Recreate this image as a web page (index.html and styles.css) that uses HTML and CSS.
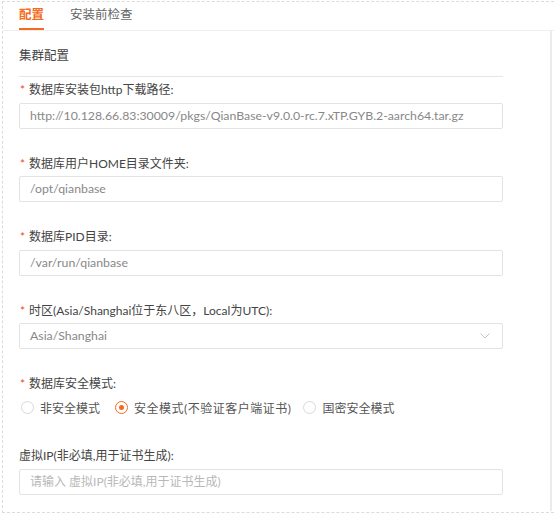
FILE: index.html
```html
<!DOCTYPE html>
<html lang="zh">
<head>
<meta charset="utf-8">
<link rel="stylesheet" href="styles.css">
</head>
<body>
<div class="frame">
  <div class="tabs">
    <div class="tab active">配置</div>
    <div class="tab">安装前检查</div>
  </div>
  <div class="panel">
    <div class="section-title">集群配置</div>
    <div class="item">
      <div class="label"><span class="req">*</span>数据库安装包http下载路径:</div>
      <div class="input">http://10.128.66.83:30009/pkgs/QianBase-v9.0.0-rc.7.xTP.GYB.2-aarch64.tar.gz</div>
    </div>
    <div class="item">
      <div class="label"><span class="req">*</span>数据库用户HOME目录文件夹:</div>
      <div class="input">/opt/qianbase</div>
    </div>
    <div class="item">
      <div class="label"><span class="req">*</span>数据库PID目录:</div>
      <div class="input">/var/run/qianbase</div>
    </div>
    <div class="item">
      <div class="label"><span class="req">*</span>时区(Asia/Shanghai位于东八区，Local为UTC):</div>
      <div class="input select">
        <span>Asia/Shanghai</span>
        <svg class="chev" width="10" height="6" viewBox="0 0 10 6"><path d="M0.5 0.5 L5 5 L9.5 0.5" fill="none" stroke="#c0c4cc" stroke-width="1"/></svg>
      </div>
    </div>
    <div class="item radio-item">
      <div class="label"><span class="req">*</span>数据库安全模式:</div>
      <div class="radios">
        <label class="radio"><span class="dot"></span>非安全模式</label>
        <label class="radio checked"><span class="dot"></span>安全模式(不验证客户端证书)</label>
        <label class="radio"><span class="dot"></span>国密安全模式</label>
      </div>
    </div>
    <div class="item">
      <div class="label plain">虚拟IP(非必填,用于证书生成):</div>
      <div class="input placeholder">请输入 虚拟IP(非必填,用于证书生成)</div>
    </div>
  </div>
</div>
</body>
</html>
```
FILE: styles.css
```css
* { box-sizing: border-box; }
html, body { margin: 0; padding: 0; background: #fff; }
body {
  font-family: "Lato", "Noto Sans CJK SC", sans-serif;
  font-size: 12px;
  color: #444;
  overflow: hidden;
}
.frame {
  margin: 1px 0 0 2px;
  width: 552px;
  height: 512px;
  border: 1px dashed #dcdcdc;
  border-right: none;
}
.tabs {
  display: flex;
  height: 29px;
  padding-left: 16px;
  gap: 26px;
  border-bottom: 1px solid #eeeeee;
}
.tab {
  font-size: 12.5px;
  line-height: 25px;
  color: #666;
}
.tab.active {
  color: #f26b21;
  font-weight: 700;
  border-bottom: 2px solid #f26b21;
}
.panel {
  width: 549px;
  height: 480px;
  border-right: 2px solid #ebebeb;
  padding: 15px 47px 0 16px;
}
.section-title {
  font-size: 12.5px;
  line-height: 20px;
  color: #444;
  padding-bottom: 10px;
  border-bottom: 1px solid #e6e6e6;
  margin-bottom: 1px;
}
.item { margin-bottom: 23px; }
.label {
  line-height: 20px;
  padding-top: 2px;
  color: #444;
}
.req {
  color: #f04a2a;
  display: inline-block;
  width: 10px;
  padding-left: 1px;
  font-size: 12px;
}
.input {
  margin-top: 2.5px;
  height: 26px;
  border: 1px solid #e3e3e3;
  border-radius: 2px;
  padding: 0 10px;
  line-height: 24px;
  font-size: 12.3px;
  color: #888;
  white-space: nowrap;
  overflow: hidden;
}
.input.placeholder { color: #b8b8b8; font-size: 12px; }
.select {
  display: flex;
  justify-content: space-between;
  align-items: center;
}
.chev { margin-right: 2px; }
.radio-item { margin-bottom: 27px; }
.radios {
  margin-top: 3px;
  display: flex;
  align-items: center;
  height: 20px;
  padding-left: 2px;
}
.radio {
  display: flex;
  align-items: center;
  color: #555;
  margin-right: 15px;
}
.radio.checked {
  letter-spacing: 0.5px;
  margin-right: 12px;
}
.dot {
  width: 13px;
  height: 13px;
  border: 1px solid #d9d9d9;
  border-radius: 50%;
  margin-right: 6px;
  position: relative;
  display: inline-block;
}
.radio.checked .dot { border-color: #f26b21; }
.radio.checked .dot::after {
  content: "";
  position: absolute;
  left: 3px;
  top: 3px;
  width: 5px;
  height: 5px;
  border-radius: 50%;
  background: #f26b21;
}
```
